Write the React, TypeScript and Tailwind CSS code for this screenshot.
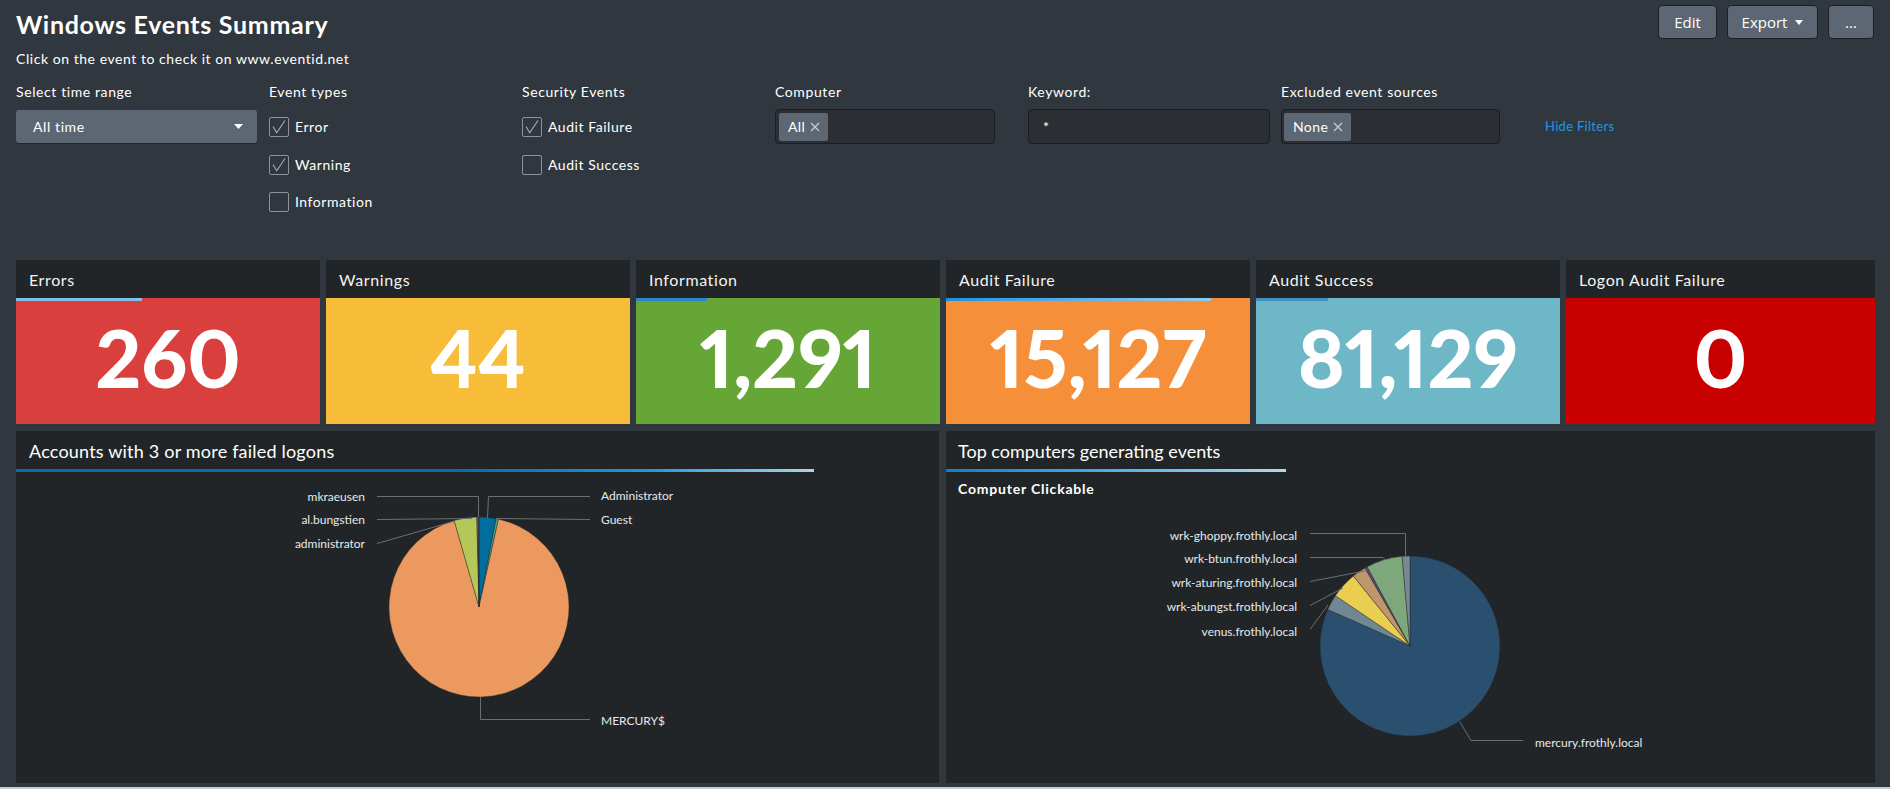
import React from "react";

const FONT = "Lato, 'Liberation Sans', sans-serif";

// angles in degrees, clockwise from 12 o'clock
function slice(cx: number, cy: number, r: number, a0: number, a1: number) {
    const pt = (a: number) => {
        const rad = (a * Math.PI) / 180;
        return [cx + r * Math.sin(rad), cy - r * Math.cos(rad)];
    };
    const [x0, y0] = pt(a0);
    const [x1, y1] = pt(a1);
    const large = a1 - a0 > 180 ? 1 : 0;
    return `M ${cx} ${cy} L ${x0} ${y0} A ${r} ${r} 0 ${large} 1 ${x1} ${y1} Z`;
}

const leftSlices = [
    { a0: 0, a1: 11, color: "#006d9c" },
    { a0: 11, a1: 12.5, color: "#4fa484" },
    { a0: 12.5, a1: 344, color: "#ec9960" },
    { a0: 344, a1: 358.6, color: "#b6c75a" },
    { a0: 358.6, a1: 359.4, color: "#1e93c6" },
    { a0: 359.4, a1: 360, color: "#5a4575" },
];

const rightSlices = [
    { a0: 0, a1: 294, color: "#2b4f6f" },
    { a0: 294, a1: 304, color: "#708794" },
    { a0: 304, a1: 321, color: "#e9ce52" },
    { a0: 321, a1: 330, color: "#c0966c" },
    { a0: 330, a1: 331.6, color: "#5b4b7c" },
    { a0: 331.6, a1: 355, color: "#7ea77b" },
    { a0: 355, a1: 360, color: "#7a8894" },
];

function Checkbox({ label, checked }: { label: string; checked?: boolean }) {
    return (
        <div className="flex items-center h-[20px] gap-[6px]">
            <div className="w-[20px] h-[20px] border border-[#8d9398] rounded-[2px]">
                {checked && (
                    <svg width="18" height="18" viewBox="0 0 18 18">
                        <path d="M3 8.5 L6.7 14.8 L15 2.5" fill="none" stroke="#a9aeb3" strokeWidth="1.1" />
                    </svg>
                )}
            </div>
            <span className="text-[14px] tracking-[0.55px] text-white">{label}</span>
        </div>
    );
}

function XMark() {
    return (
        <svg width="10" height="10" viewBox="0 0 10 10" className="ml-[5px]">
            <path d="M1 1 L9 9 M9 1 L1 9" stroke="#c8ced4" strokeWidth="1.2" />
        </svg>
    );
}

function Tag({ text }: { text: string }) {
    return (
        <div className="h-[28px] bg-[#5c6773] rounded-[2px] flex items-center pl-[9px] pr-[8px] text-[14px] tracking-[0.4px] text-white">
            {text}
            <XMark />
        </div>
    );
}

function StatPanel({ title, value, bg, bar, w }: { title: string; value: string; bg: string; bar?: string; w: string }) {
    return (
        <div className={`flex flex-col ${w}`}>
            <div className="h-[38px] bg-[#212527] pl-[13px] pt-[8px] text-[16px] leading-6 tracking-[0.6px] text-[#f2f4f5]">{title}</div>
            <div className={`relative h-[126px] flex items-center justify-center pb-[9px] ${bg}`}>
                {bar && <div className={`absolute top-0 left-0 h-[3px] ${bar}`} />}
                <span className="text-[80px] leading-none font-black proportional-nums text-white">{value}</span>
            </div>
        </div>
    );
}

export default function App() {
    return (
        <div className="w-[1890px] h-[789px] overflow-hidden bg-[#31373e] text-white" style={{ fontFamily: FONT }}>
            {/* header + filters */}
            <div className="h-[260px] px-[16px]">
                <div className="flex justify-between items-start pt-[5px]">
                    <h1 className="mt-[3px] text-[25px] leading-8 font-bold tracking-[0.7px]">Windows Events Summary</h1>
                    <div className="flex gap-[10px] text-[15px]" style={{ fontFamily: "'Open Sans', sans-serif" }}>
                        <button className="h-[34px] w-[59px] bg-[#5c6773] border border-[#1c1f23] rounded-[4px] text-white">Edit</button>
                        <button className="h-[34px] w-[91px] bg-[#5c6773] border border-[#1c1f23] rounded-[4px] text-white flex items-center justify-center gap-[8px]">
                            Export
                            <svg width="8" height="5" viewBox="0 0 8 5">
                                <path d="M0 0 L8 0 L4 5 Z" fill="#ffffff" />
                            </svg>
                        </button>
                        <button className="h-[34px] w-[46px] bg-[#5c6773] border border-[#1c1f23] rounded-[4px] text-white">...</button>
                    </div>
                </div>
                <p className="mt-[9px] text-[14px] leading-5 tracking-[0.55px]">Click on the event to check it on www.eventid.net</p>

                <div className="flex mt-[13px] text-[14px] leading-5 tracking-[0.6px]">
                    <div className="w-[253px]">
                        <div>Select time range</div>
                        <div className="mt-[8px] w-[241px] h-[33px] bg-[#5c6773] rounded-[3px] shadow-[0_1px_0_#23272b] flex items-center justify-between pl-[17px] pr-[14px]">
                            <span>All time</span>
                            <svg width="9" height="5" viewBox="0 0 9 5">
                                <path d="M0 0 L9 0 L4.5 5 Z" fill="#ffffff" />
                            </svg>
                        </div>
                    </div>
                    <div className="w-[253px]">
                        <div>Event types</div>
                        <div className="mt-[15px] flex flex-col gap-[17.5px]">
                            <Checkbox label="Error" checked />
                            <Checkbox label="Warning" checked />
                            <Checkbox label="Information" />
                        </div>
                    </div>
                    <div className="w-[253px]">
                        <div>Security Events</div>
                        <div className="mt-[15px] flex flex-col gap-[17.5px]">
                            <Checkbox label="Audit Failure" checked />
                            <Checkbox label="Audit Success" />
                        </div>
                    </div>
                    <div className="w-[253px]">
                        <div>Computer</div>
                        <div className="mt-[7px] w-[220px] h-[35px] bg-[#2b2f33] border border-[#1b1e21] rounded-[4px] flex items-center px-[3px]">
                            <Tag text="All" />
                        </div>
                    </div>
                    <div className="w-[253px]">
                        <div>Keyword:</div>
                        <div className="mt-[7px] w-[242px] h-[35px] bg-[#2b2f33] border border-[#1b1e21] rounded-[4px] flex items-center pl-[14px]">
                            *
                        </div>
                    </div>
                    <div className="w-[253px]">
                        <div>Excluded event sources</div>
                        <div className="mt-[7px] w-[219px] h-[35px] bg-[#2b2f33] border border-[#1b1e21] rounded-[4px] flex items-center px-[2px]">
                            <Tag text="None" />
                        </div>
                    </div>
                    <div className="ml-[11px] pt-[34px] text-[13px] tracking-[0.3px] text-[#1e98e4]">Hide Filters</div>
                </div>
            </div>

            {/* single value row */}
            <div className="flex gap-[6px] pl-[16px] pr-[15px]">
                <StatPanel w="w-[304px]" title="Errors" value="260" bg="bg-[#d93f3c]" bar="w-[126px] bg-[#7fc1e6]" />
                <StatPanel w="w-[304px]" title="Warnings" value="44" bg="bg-[#f7bc38]" />
                <StatPanel w="w-[304px]" title="Information" value="1,291" bg="bg-[#65a637]" bar="w-[71px] bg-[#2a88c8]" />
                <StatPanel
                    w="w-[304px]"
                    title="Audit Failure"
                    value="15,127"
                    bg="bg-[#f58f39]"
                    bar="w-[265px] bg-linear-to-r from-[#1592e0] to-[#92cbea]"
                />
                <StatPanel w="w-[304px]" title="Audit Success" value="81,129" bg="bg-[#6db7c6]" bar="w-[72px] bg-[#3d8fc6]" />
                <StatPanel w="flex-1" title="Logon Audit Failure" value="0" bg="bg-[#c80000]" />
            </div>

            {/* charts row */}
            <div className="flex gap-[7px] pl-[16px] mt-[7px]">
                <div className="w-[923px] h-[352px] bg-[#212527] flex flex-col">
                    <div className="pl-[13px] pt-[8px] text-[18px] leading-6 tracking-[0.2px]">Accounts with 3 or more failed logons</div>
                    <div className="mt-[6px] h-[3px] w-[798px] bg-linear-to-r from-[#0b6aa5] from-55% via-[#1f9bd9] via-80% to-[#a7d2e9]" />
                    <svg width="923" height="311" viewBox="16 472 923 311" style={{ fontFamily: FONT }}>
                        {leftSlices.map((s, i) => (
                            <path key={i} d={slice(479, 607, 90, s.a0, s.a1)} fill={s.color} stroke="#212527" strokeWidth="0.4" />
                        ))}
                        <g fill="none" stroke="#6a6f74" strokeWidth="1">
                            <path d="M377 496.5 L478.5 496.5 L478.5 517" />
                            <path d="M377 519.5 L472 518.5" />
                            <path d="M377 543.5 L455 521" />
                            <path d="M590 496.5 L488.5 496.5 L487.5 518" />
                            <path d="M590 519.5 L496 518.5" />
                            <path d="M480.5 697 L480.5 719.5 L590 719.5" />
                        </g>
                        <g fill="#e6e9ec" fontSize="12">
                            <text x="365" y="501" textAnchor="end">mkraeusen</text>
                            <text x="365" y="524" textAnchor="end">al.bungstien</text>
                            <text x="365" y="548" textAnchor="end">administrator</text>
                            <text x="601" y="500">Administrator</text>
                            <text x="601" y="524">Guest</text>
                            <text x="601" y="725">MERCURY$</text>
                        </g>
                    </svg>
                </div>
                <div className="w-[929px] h-[352px] bg-[#212527] flex flex-col">
                    <div className="pl-[12px] pt-[8px] text-[18px] leading-6">Top computers generating events</div>
                    <div className="mt-[6px] h-[3px] w-[340px] bg-linear-to-r from-[#0e7fc4] via-[#3ea6de] via-40% to-[#b0d8ee]" />
                    <div className="mt-[7px] pl-[12px] text-[14px] leading-5 font-bold tracking-[0.8px]">Computer Clickable</div>
                    <svg width="929" height="284" viewBox="946 499 929 284" style={{ fontFamily: FONT }}>
                        {rightSlices.map((s, i) => (
                            <path key={i} d={slice(1410, 646, 90, s.a0, s.a1)} fill={s.color} stroke="#212527" strokeWidth="0.4" />
                        ))}
                        <g fill="none" stroke="#6a6f74" strokeWidth="1">
                            <path d="M1310 533.5 L1405.5 533.5 L1405.5 556" />
                            <path d="M1310 557.5 L1383 557.5 L1385 560" />
                            <path d="M1310 581.5 L1365 571" />
                            <path d="M1310 605.5 L1343 588" />
                            <path d="M1310 629.5 L1328 605" />
                            <path d="M1460 722 L1471 740.5 L1523 740.5" />
                        </g>
                        <g fill="#e6e9ec" fontSize="12">
                            <text x="1297" y="540" textAnchor="end">wrk-ghoppy.frothly.local</text>
                            <text x="1297" y="563" textAnchor="end">wrk-btun.frothly.local</text>
                            <text x="1297" y="587" textAnchor="end">wrk-aturing.frothly.local</text>
                            <text x="1297" y="611" textAnchor="end">wrk-abungst.frothly.local</text>
                            <text x="1297" y="636" textAnchor="end">venus.frothly.local</text>
                            <text x="1535" y="747">mercury.frothly.local</text>
                        </g>
                    </svg>
                </div>
            </div>
            <div className="mt-[4px] h-[2px] bg-[#c9cbcd]" />
        </div>
    );
}
